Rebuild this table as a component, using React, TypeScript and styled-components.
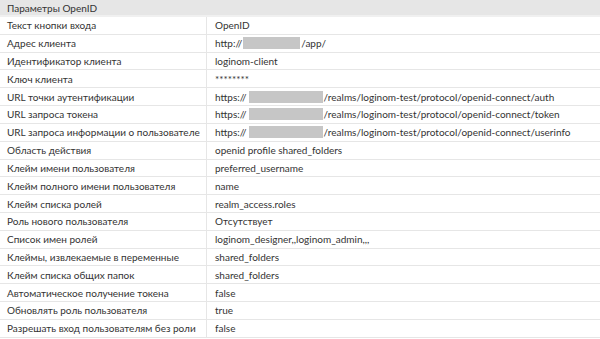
import React from 'react'
import styled, { createGlobalStyle } from 'styled-components'

const GlobalStyle = createGlobalStyle`
  html, body {
    margin: 0;
    padding: 0;
    background: #ffffff;
  }
  body {
    font-family: Lato, 'Open Sans', sans-serif;
    color: #333333;
  }
`

const Panel = styled.section`
  width: 600px;
  display: flex;
  flex-direction: column;
`

const Header = styled.div`
  height: 15px;
  padding: 0 7px;
  display: flex;
  align-items: center;
  background: #e6e6e6;
  border-bottom: 2px solid #f0f0f0;
  font-size: 10px;
`

const Row = styled.div`
  display: grid;
  grid-template-columns: 207px 1fr;
  height: 17.82px;
  box-sizing: border-box;
  border-bottom: 1px solid #e6e6e6;
  font-size: 10px;
  line-height: 16px;
`

const Label = styled.div`
  padding-left: 7px;
  border-right: 1px solid #e6e6e6;
  white-space: nowrap;
  display: flex;
  align-items: center;
`

const Value = styled.div`
  padding-left: 8px;
  white-space: nowrap;
  display: flex;
  align-items: center;
`

const Masked = styled.span<{ $w: number; $gap?: number }>`
  display: inline-block;
  width: ${({ $w }) => $w}px;
  height: 12px;
  margin: 0 1px 0 ${({ $gap = 1 }) => $gap}px;
  background: #c6c6c6;
`

type Item = { label: string; value: React.ReactNode }

const realm = (tail: string) => (
  <>
    https://<Masked $w={74} $gap={2} />/realms/loginom-test/protocol/openid-connect/{tail}
  </>
)

const items: Item[] = [
  { label: 'Текст кнопки входа', value: 'OpenID' },
  {
    label: 'Адрес клиента',
    value: (
      <>
        http://<Masked $w={57} />/app/
      </>
    ),
  },
  { label: 'Идентификатор клиента', value: 'loginom-client' },
  { label: 'Ключ клиента', value: '********' },
  { label: 'URL точки аутентификации', value: realm('auth') },
  { label: 'URL запроса токена', value: realm('token') },
  { label: 'URL запроса информации о пользователе', value: realm('userinfo') },
  { label: 'Область действия', value: 'openid profile shared_folders' },
  { label: 'Клейм имени пользователя', value: 'preferred_username' },
  { label: 'Клейм полного имени пользователя', value: 'name' },
  { label: 'Клейм списка ролей', value: 'realm_access.roles' },
  { label: 'Роль нового пользователя', value: 'Отсутствует' },
  { label: 'Список имен ролей', value: 'loginom_designer,,loginom_admin,,,' },
  { label: 'Клеймы, извлекаемые в переменные', value: 'shared_folders' },
  { label: 'Клейм списка общих папок', value: 'shared_folders' },
  { label: 'Автоматическое получение токена', value: 'false' },
  { label: 'Обновлять роль пользователя', value: 'true' },
  { label: 'Разрешать вход пользователям без роли', value: 'false' },
]

export default function App() {
  return (
    <>
      <GlobalStyle />
      <Panel>
        <Header>Параметры OpenID</Header>
        {items.map((item) => (
          <Row key={item.label}>
            <Label>{item.label}</Label>
            <Value>{item.value}</Value>
          </Row>
        ))}
      </Panel>
    </>
  )
}
